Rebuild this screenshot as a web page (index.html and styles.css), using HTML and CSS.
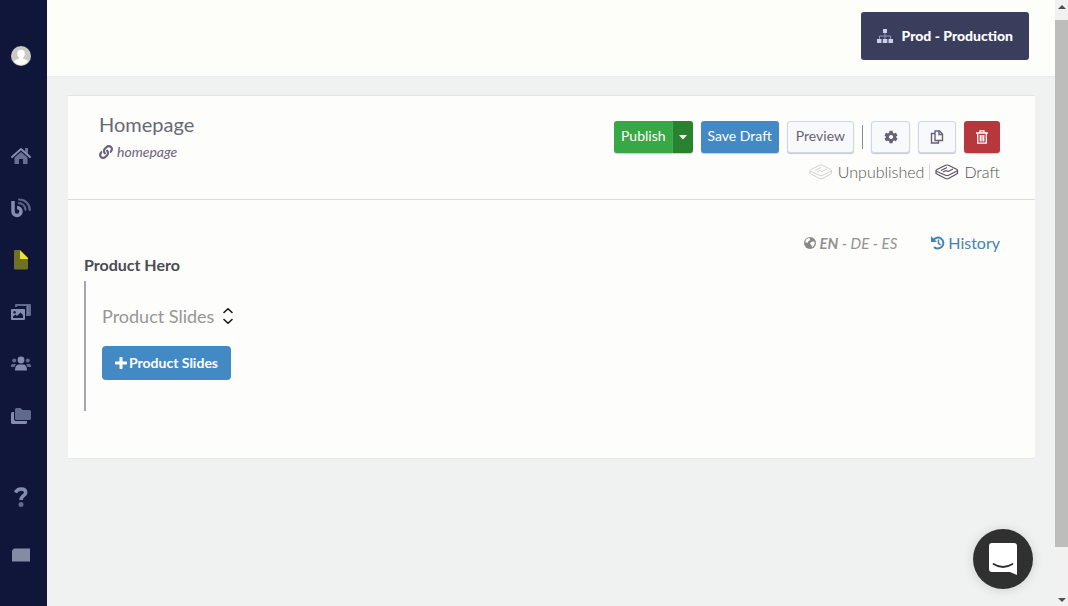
FILE: index.html
```html
<!DOCTYPE html>
<html lang="en">
<head>
<meta charset="utf-8">
<title>Homepage</title>
<link rel="stylesheet" href="styles.css">
</head>
<body>
<div class="app">
  <nav class="sidebar" aria-label="Main">
    <a class="avatar" href="#" aria-label="Account">
      <svg viewBox="0 0 20 20" width="20" height="20"><circle cx="10" cy="10" r="10" fill="#c9c9c6"/><path d="M10 3.800c-2.600 0-3.900 1.800-3.800 4.100.1 1.700.8 2.900 1.700 3.600v1.300c-2 .6-3.900 1.200-4.900 2.600a9 9 0 0 0 14 0c-1-1.400-2.900-2-4.900-2.600v-1.300c.9-.7 1.600-1.900 1.700-3.600.1-2.300-1.200-4.100-3.800-4.100z" fill="#fff"/></svg>
    </a>
    <div class="nav-group">
      <a href="#" aria-label="Home"><svg viewBox="0 0 20 18" width="20" height="18"><path d="M1 10 10 2l9 8" fill="none" stroke="currentColor" stroke-width="2" stroke-linecap="round" stroke-linejoin="round"/><path d="M14 1h3v6l-3-2.600zM3.500 10.500 10 5l6.500 5.500V17H12v-5H8v5H3.500z" fill="currentColor" opacity=".75"/></svg></a>
      <a href="#" aria-label="Blog"><svg viewBox="0 0 20 20" width="20" height="20" fill="none" stroke="currentColor"><path d="M2 3v10.500a4 4 0 1 0 4-4" stroke-width="3.500"/><path d="M8 5.200a7 7 0 0 1 6.500 6.500M8 1.500A10.500 10.500 0 0 1 18.800 12" stroke-width="2.200" opacity=".65" stroke-linecap="round"/></svg></a>
      <a href="#" class="active" aria-label="Pages" aria-current="page"><svg viewBox="0 0 16 20" width="16" height="20"><path d="M2 0h6v9h7v9.500q0 1-1 1H2q-1 0-1-1V1q0-1 1-1z" fill="#707025"/><path d="M7 1v8h8v-1L8 1z" fill="#eee32b"/></svg></a>
      <a href="#" aria-label="Media"><svg viewBox="0 0 20 16" width="20" height="16"><path d="M5 0h14q1 0 1 1v10q0 1-1 1h-4v-2h1V2H6v1H4V1q0-1 1-1z" fill="currentColor" opacity=".7"/><path d="M15 2h3v1.500h-1V5h1v1.500h-1V8h1v2h-3z" fill="currentColor" opacity=".5"/><path fill-rule="evenodd" d="M1 5h12q1 0 1 1v9q0 1-1 1H1q-1 0-1-1V6q0-1 1-1zM2 14h10v-3L9.500 8.500 6 12l-1.500-1.500L2 12.500zM3.500 7a1.300 1.300 0 1 0 .1 0z" fill="currentColor"/></svg></a>
      <a href="#" aria-label="Users"><svg viewBox="0 0 20 16" width="20" height="16" fill="currentColor"><circle cx="10" cy="4" r="3.400"/><path d="M4 14.500C4 10 6 8.500 8 8.500h4c2 0 4 1.500 4 6z"/><g opacity=".7"><circle cx="3.200" cy="4.500" r="2"/><circle cx="16.800" cy="4.500" r="2"/><path d="M0 11V9.500Q0 8 1.500 8H5L3.300 11zM20 11V9.500Q20 8 18.500 8H15l1.700 3z"/></g></svg></a>
      <a href="#" aria-label="Folders"><svg viewBox="0 0 20 16" width="20" height="16" fill="currentColor"><path d="M5.500 0h4l2 2h7Q20 2 20 3.500v7q0 1.500-1.500 1.500h-13Q4 12 4 10.500v-9Q4 0 5.500 0z" opacity=".7"/><path d="M1.500 4H3v7q0 2 2 2h11v1.500q0 1.500-1.500 1.500h-13Q0 16 0 14.500v-9Q0 4 1.500 4z"/></svg></a>
    </div>
    <div class="nav-group nav-group-help">
      <a href="#" aria-label="Help"><svg viewBox="0 0 14 20" width="14" height="20"><path d="M1.500 5.500C2.700 3.200 4.400 2 7 2c2.900 0 4.700 1.300 4.700 3.600C11.700 9 7 8.500 7 13" fill="none" stroke="currentColor" stroke-width="3.500"/><circle cx="7" cy="17.500" r="2.500" fill="currentColor" opacity=".7"/></svg></a>
      <a href="#" aria-label="Docs"><svg viewBox="0 0 18 14" width="18" height="14"><path d="M2 .5h16v13H0v-11z" fill="#858ba5"/></svg></a>
    </div>
  </nav>

  <div class="page">
    <header class="topbar">
      <button type="button" class="env">
        <svg viewBox="0 0 16 14" width="16" height="14"><path d="M8 4v3M2.500 10V7h11v3M8 7v3" fill="none" stroke="#9695ba"/><path d="M6 0h4v4H6zM0 10h4.500v4H0zM5.800 10h4.500v4H5.800zM11.500 10H16v4h-4.500z" fill="#ccd0ee"/></svg>
        <span class="label">Prod - Production</span>
      </button>
    </header>

    <main class="card">
      <section class="card-head">
        <div class="heading">
          <h1>Homepage</h1>
          <p class="slug"><svg viewBox="0 0 512 512" width="14" height="14"><path fill="currentColor" d="M326.600 185.400c59.700 59.800 58.900 155.700.4 214.600l-.4.400-67.200 67.200c-59.300 59.300-155.700 59.300-215 0s-59.300-155.700 0-215l37.100-37.100c9.800-9.800 26.800-3.300 27.300 10.600.6 17.700 3.800 35.500 9.700 52.700 2 5.800.6 12.300-3.800 16.600l-13.100 13.100c-28 28-28.900 73.700-1.200 102 28 28.600 74.100 28.700 102.300.5l67.200-67.200c28.200-28.200 28.100-73.800 0-101.800-3.700-3.700-7.400-6.600-10.300-8.600a16 16 0 0 1-6.900-12.600c-.4-10.600 3.300-21.500 11.700-29.800l21.100-21.100c5.500-5.500 14.200-6.200 20.600-1.700a152 152 0 0 1 20.500 17.200zm141-141c-59.300-59.300-155.700-59.300-215 0l-67.200 67.200-.4.400c-58.600 58.900-59.400 154.800.4 214.600a152 152 0 0 0 20.500 17.200c6.400 4.500 15.100 3.800 20.600-1.700l21.100-21.100c8.400-8.400 12.100-19.200 11.700-29.800a16 16 0 0 0-6.900-12.600c-2.900-2-6.600-4.900-10.300-8.600-28.100-28.100-28.200-73.600 0-101.800l67.200-67.200c28.200-28.200 74.300-28.100 102.300.5 27.800 28.300 26.900 73.900-1.200 102l-13.100 13.100c-4.400 4.400-5.800 10.800-3.800 16.600 5.900 17.200 9 35 9.700 52.700.5 13.900 17.500 20.400 27.300 10.600l37.100-37.100c59.300-59.300 59.300-155.700 0-215z"/></svg>homepage</p>
        </div>
        <div class="controls">
          <div class="toolbar">
            <div class="split">
              <button type="button" class="btn green">Publish</button><button type="button" class="btn caret" aria-label="More publish options"><svg viewBox="0 0 8 5" width="8" height="5"><path d="M0 0h8L4 4.500z" fill="#fff"/></svg></button>
            </div>
            <button type="button" class="btn blue">Save Draft</button>
            <button type="button" class="btn plain preview">Preview</button>
            <span class="rule"></span>
            <button type="button" class="btn plain icon settings" aria-label="Settings"><svg viewBox="0 0 14 14" width="14" height="14"><path fill="currentColor" fill-rule="evenodd" d="M5.500.8h3l.4 1.900 1.200.7 1.900-.6 1.500 2.600-1.500 1.300v.6l1.500 1.300-1.500 2.600-1.900-.6-1.200.7-.4 1.900h-3l-.4-1.900-1.200-.7-1.900.6L.5 8.600 2 7.300v-.6L.5 5.400 2 2.800l1.900.6 1.200-.7zM7 4.900a2.100 2.100 0 1 0 .1 0z"/></svg></button>
            <button type="button" class="btn plain icon" aria-label="Duplicate"><svg viewBox="0 0 14 14" width="14" height="14" fill="none" stroke="currentColor" stroke-width="1.400"><path d="M5 1h4.500l3 3v6.500H5zM9 1v3.500h3.500M5 3.500H1.500V13h7v-2.500"/></svg></button>
            <button type="button" class="btn red" aria-label="Delete"><svg viewBox="0 0 12 14" width="12" height="14" fill="none" stroke="currentColor" stroke-width="1.300"><path d="M0 3h12M4 2.800V.8h4v2M1.700 3v10.200h8.600V3M4.300 5v6.500M6 5v6.500M7.700 5v6.500"/></svg></button>
          </div>
          <div class="status">
            <svg class="faded" viewBox="0 0 24 16" width="24" height="16" fill="none" stroke="currentColor" stroke-linejoin="round"><path d="M1 6.500Q1 6 2 5.500L10.500 1.300q1.500-.6 3 0L22 5.500q1 .5 0 1.500l-8.500 4.300q-1.500.7-3 0L2 7.500Q1 7 1 6.500zM1 6.500v3l9.500 5q1.500.7 3 0l9-5v-3M6 6.500 12 3.500M8 8l3-1.500 2 1 5-2.500"/></svg>
            <span>Unpublished</span>
            <span class="rule short"></span>
            <svg viewBox="0 0 24 16" width="24" height="16" fill="none" stroke="currentColor" stroke-width="1.200" stroke-linejoin="round"><path d="M1 6.500Q1 6 2 5.500L10.500 1.300q1.500-.6 3 0L22 5.500q1 .5 0 1.500l-8.500 4.300q-1.500.7-3 0L2 7.500Q1 7 1 6.500zM1 6.500v3l9.500 5q1.500.7 3 0l9-5v-3M6 6.500 12 3.500M8 8l3-1.500 2 1 5-2.500"/></svg>
            <span>Draft</span>
          </div>
        </div>
      </section>

      <section class="card-body">
        <div class="meta">
          <div class="languages"><svg viewBox="0 0 12 12" width="12" height="12"><circle cx="6" cy="6" r="6" fill="#888"/><path d="M2 2.500 4.500 1l2 .7-.8 1.800-1.500.8L4 6 2.500 5.200 1.300 6zM7 5l2.500-.8L11 6 9.500 9 8 10.500 7.500 8 6 7z" fill="#fdfdfb"/></svg><span><strong>EN</strong> - <a href="#">DE</a> - <a href="#">ES</a></span></div>
          <a class="history" href="#"><svg viewBox="0 0 14 14" width="14" height="14" fill="none" stroke="currentColor"><path d="M2.300 4A5.500 5.500 0 1 1 3 11" stroke-width="2"/><path d="M0 0v6h6z" fill="currentColor" stroke="none"/><path d="M7.500 3.500v4l2.200 1.300" stroke-width="1.500"/></svg>History</a>
        </div>
        <h2>Product Hero</h2>
        <div class="field-group">
          <div class="field-title"><h3>Product Slides</h3>
            <button type="button" class="sort" aria-label="Expand or collapse"><svg viewBox="0 0 10 16" width="10" height="16" fill="none" stroke="#111" stroke-width="1.500" stroke-linecap="round" stroke-linejoin="round"><path d="m1 4.500 4-3.700 4 3.700M1 11.500l4 3.700 4-3.700"/></svg></button>
          </div>
          <button type="button" class="add"><svg viewBox="0 0 12 12" width="12" height="12"><path d="M6 1v10M1 6h10" stroke="#fff" stroke-width="3" stroke-linecap="round"/></svg><span class="label">Product Slides</span></button>
        </div>
      </section>
    </main>
  </div>

  <div class="scrollbar" aria-hidden="true">
    <svg viewBox="0 0 8 4" width="8" height="4"><path d="M0 4h8L4 0z" fill="#505050"/></svg>
    <span class="thumb"></span>
    <svg viewBox="0 0 8 4" width="8" height="4"><path d="M0 0h8L4 4z" fill="#505050"/></svg>
  </div>
</div>
<button type="button" class="chat" aria-label="Open chat"><svg viewBox="0 0 28 32" width="28" height="32"><path d="M3 0h22q3 0 3 3v29l-7-3H3q-3 0-3-3V3q0-3 3-3z" fill="#fff"/><path d="M4.500 21q9.500 6 19 0" fill="none" stroke="#303030" stroke-width="1.800" stroke-linecap="round"/></svg></button>
</body>
</html>
```
FILE: styles.css
```css
* { box-sizing: border-box; }
body, h1, h2, h3, p { margin: 0; }
body { font-family: Lato, sans-serif; font-size: 16px; color: #555; background: #f0f2f2; }
button { font: inherit; border: 0; padding: 0; cursor: pointer; }
a { color: inherit; text-decoration: none; }
svg { display: block; flex: none; }

.app { display: flex; min-height: 100vh; }

.sidebar { width: 47px; flex: none; padding: 46px 5px 0 0; background: #10163a; color: #858daf; display: flex; flex-direction: column; align-items: center; }
.avatar { margin-bottom: 64px; }
.nav-group a { display: flex; align-items: center; justify-content: center; width: 42px; height: 52px; }
.nav-group-help { margin-top: 26px; }
.nav-group-help a { height: 58px; }

.page { flex: 1; min-width: 0; }
.topbar { display: flex; justify-content: flex-end; padding: 12px 26px 16px; background: #fdfdfa; border-bottom: 1px solid #e9ebea; }
.env { display: flex; align-items: center; gap: 8px; height: 48px; padding: 0 16px; border-radius: 3px; background: #3a3e5c; color: #fff; font-size: 14px; font-weight: 900; }
.label { padding-bottom: 2px; }

.card { margin: 18px 20px 0 21px; background: #fdfdfb; border-top: 1px solid #e2e5e5; border-bottom: 1px solid #e6e8e8; }
.card-head { display: flex; justify-content: space-between; height: 104px; padding: 14px 35px 0 31px; border-bottom: 1px solid #dcdedd; }
h1 { margin-bottom: 2px; font-size: 20px; line-height: 28px; font-weight: 400; color: #666976; }
.slug { display: flex; align-items: center; gap: 4px; font-size: 14px; line-height: 24px; font-style: italic; color: #6d627c; }

.controls { display: flex; flex-direction: column; align-items: flex-end; padding-top: 11px; }
.toolbar { display: flex; align-items: center; gap: 8px; }
.split { display: flex; }
.btn { display: flex; align-items: center; justify-content: center; height: 32px; padding: 0 7px; border-radius: 3px; font-size: 14px; color: #fff; box-shadow: 0 1px 1px #c5cbd0; }
.green, .blue, .preview { padding-bottom: 3px; }
.green { background: #38a745; border-radius: 3px 0 0 3px; }
.caret { width: 20px; background: #29822f; border-radius: 0 3px 3px 0; }
.blue { background: #438ac5; }
.plain { background: #f8f9fb; color: #685f79; border: 1px solid #d3d6df; }
.preview { padding-left: 8px; padding-right: 8px; }
.icon { width: 38px; }
.settings { width: 39px; }
.red { width: 36px; background: #b6383d; }
.rule { width: 1px; height: 24px; background: #8a8792; }
.short { height: 16px; background: #d5d5d7; }
.status { display: flex; align-items: center; gap: 5px; padding-top: 8px; line-height: 22px; font-weight: 300; color: #555; }
.status svg { color: #5c5368; }
.status .faded { color: #d3d3d3; }

.card-body { padding: 31px 35px 47px 16px; }
.meta { display: flex; justify-content: flex-end; gap: 34px; line-height: 24px; }
.languages { display: flex; align-items: center; gap: 3px; font-size: 15px; font-style: italic; color: #929292; }
.history { display: flex; align-items: center; gap: 3px; color: #4384b8; }
h2 { font-size: 16px; line-height: 20px; font-weight: 700; color: #4b4b50; }
.field-group { margin-top: 6px; padding: 23px 0 31px 16px; border-left: 2px solid #a6a4b9; }
.field-title { display: flex; align-items: center; gap: 9px; margin-bottom: 18px; }
h3 { font-size: 18px; line-height: 24px; font-weight: 400; color: #969696; }
.sort { background: none; }
.add { display: flex; align-items: center; gap: 2px; height: 34px; padding: 0 13px; border-radius: 4px; background: #438ac5; color: #fff; font-size: 14px; font-weight: 700; }

.scrollbar { position: sticky; top: 0; width: 13px; height: 100vh; flex: none; padding: 5px 0 4px; display: flex; flex-direction: column; align-items: center; background: #f1f1f1; }
.thumb { width: 13px; height: 87vh; margin: 11px 0 auto; background: #bdbebc; }
.chat { position: fixed; right: 35px; bottom: 17px; width: 60px; height: 60px; border-radius: 50%; background: #303030; display: flex; align-items: center; justify-content: center; box-shadow: 0 1px 12px rgba(0, 0, 0, .14); }
```
